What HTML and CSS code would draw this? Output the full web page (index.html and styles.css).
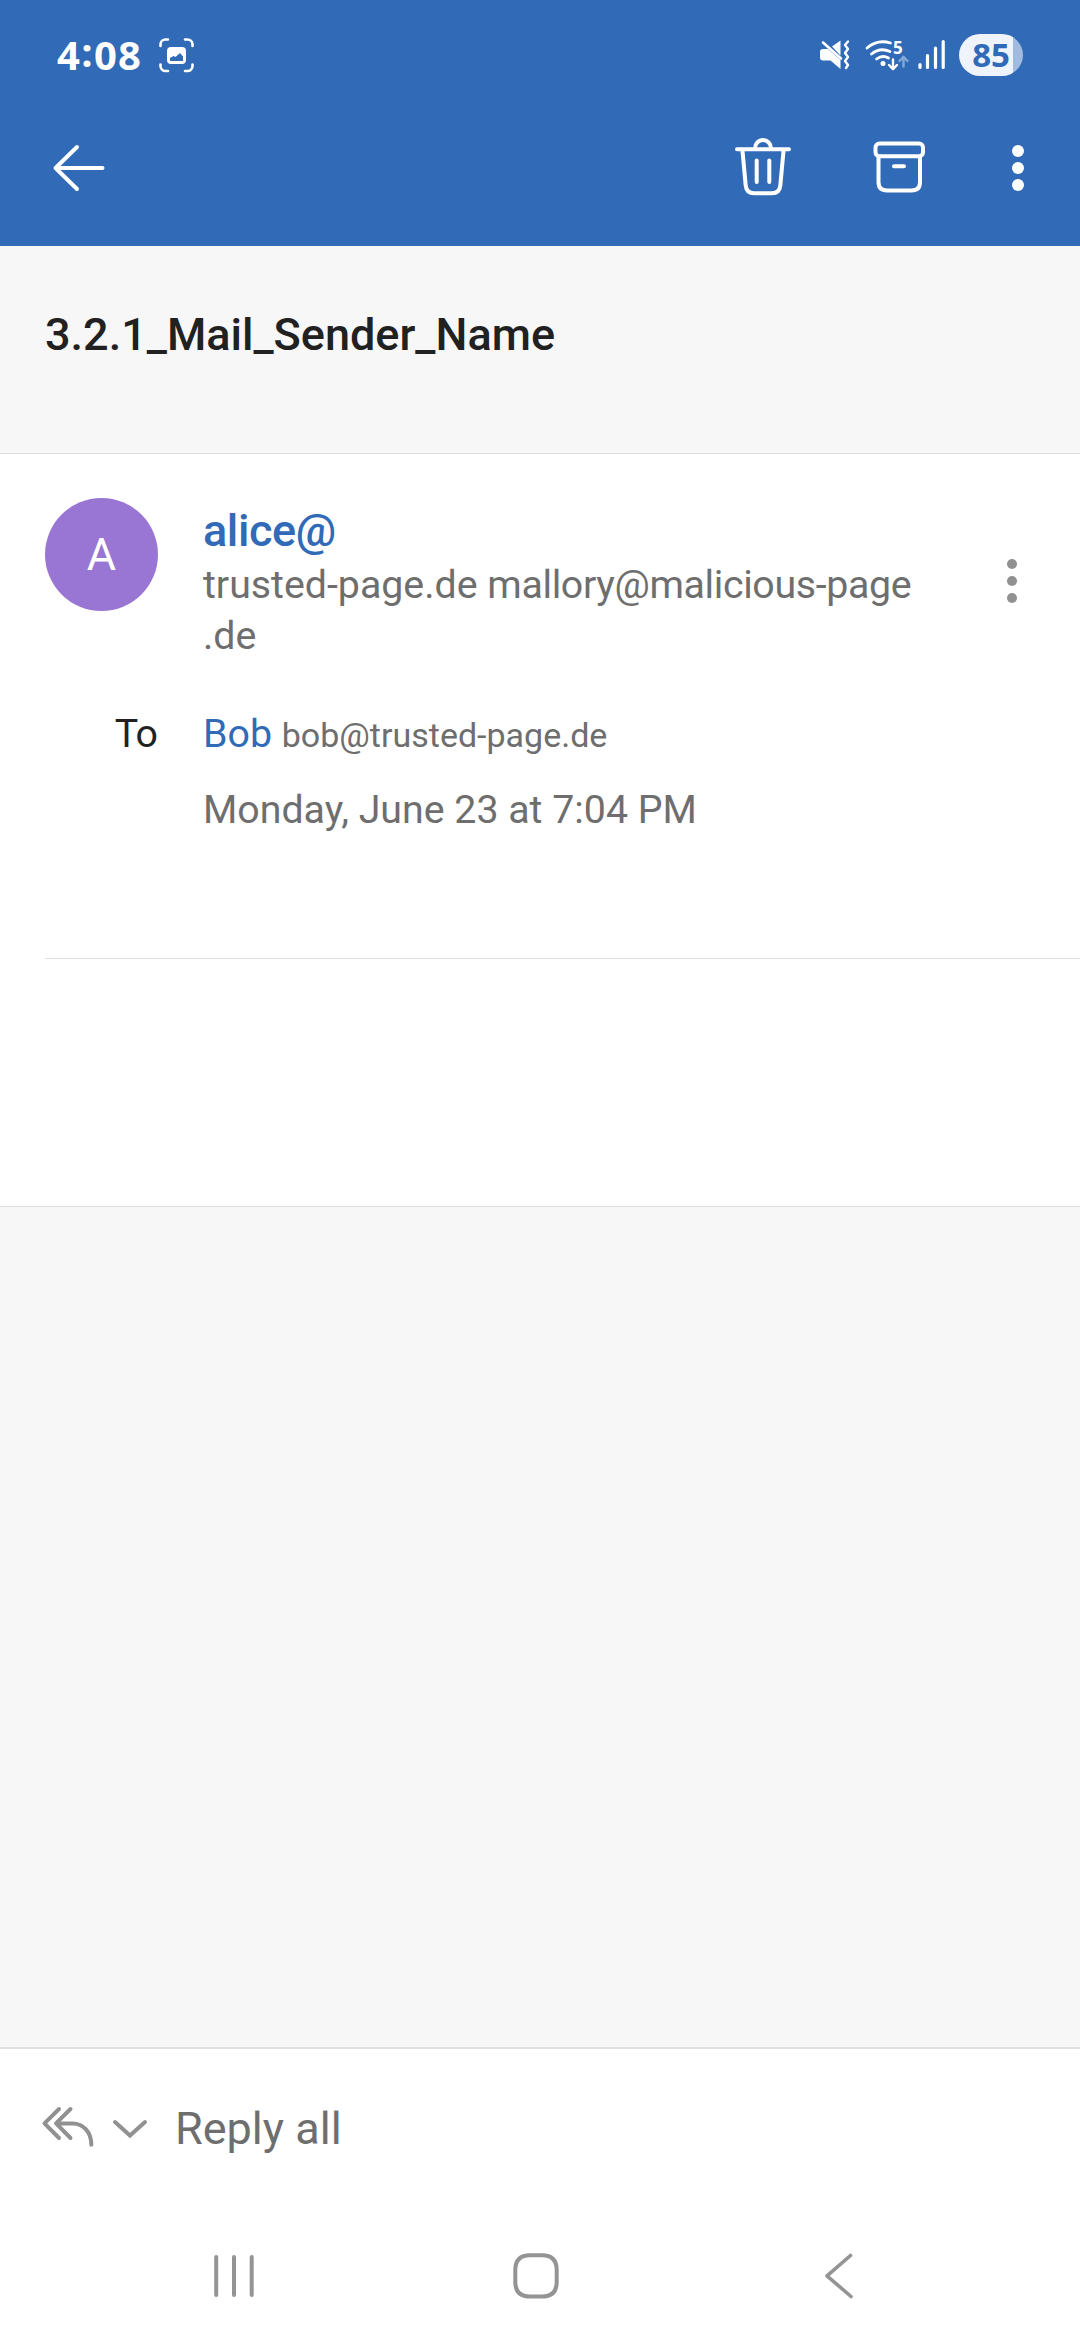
FILE: index.html
```html
<!DOCTYPE html>
<html lang="en">
<head>
<meta charset="utf-8">
<title>Mail</title>
<link rel="stylesheet" href="styles.css">
</head>
<body>
<div class="screen">
  <header class="top">
    <div class="status">
      <div class="status-left">
        <span class="clock">4<span class="colon">:</span>08</span>
        <svg width="37" height="37" viewBox="158 37 37 37" fill="none">
          <g stroke="#fff" stroke-width="2.6" stroke-linecap="round">
            <path d="M160.500 46v-1.500a5 5 0 0 1 5-5h2.500M185 39.500h2.500a5 5 0 0 1 5 5v1.500M192.500 64.500v1.500a5 5 0 0 1-5 5h-2.500M168 71h-2.500a5 5 0 0 1-5-5v-1.500"/>
          </g>
          <rect x="167" y="47" width="19" height="17" rx="4" fill="#fff"/>
          <path d="M170 61v-3l3.500-2 2 1 4.500-4 3 3.500V61z" fill="#316ab7"/>
        </svg>
      </div>
      <div class="status-right">
        <svg class="mute" width="32" height="32" viewBox="819 39 32 32">
          <path d="M832 46.500l8.500-6v15z" fill="#fff"/>
          <path d="M823 49h5l12.500 11v9l-10-8.500H823a3 3 0 0 1-3-3V52a3 3 0 0 1 3-3z" fill="#fff"/>
          <path d="M823 42.500l18 16" stroke="#fff" stroke-width="2.600" stroke-linecap="round"/>
          <path d="M848 41.500l-3 3.500 3 4-3 4 3 4-3 4 3 4-2 3" fill="none" stroke="#fff" stroke-width="2.400" stroke-linecap="round" stroke-linejoin="round"/>
        </svg>
        <svg class="wifi" width="45" height="54" viewBox="864 28.500 45 54">
          <g fill="none" stroke="#fff" stroke-width="2.800" stroke-linecap="round" stroke-linejoin="round">
            <path d="M867 48.500Q877.500 39.500 890.500 43.500"/>
            <path d="M871.500 54.500Q880 47.500 890 52"/>
            <path d="M876.500 59.500Q882.500 55 888.500 58.500"/>
            <path d="M893 60v9.500m-4-4 4 4.200 4-4.200" stroke-width="2.400"/>
            <path d="M903.500 67v-9.500m-4 4 4-4.200 4 4.200" stroke="#84a8d6" stroke-width="2.400"/>
          </g>
          <circle cx="883" cy="64" r="2.500" fill="#fff"/>
          <text x="893" y="54" class="band">5</text>
        </svg>
        <svg class="signal" width="29" height="32" viewBox="917 39 29 32">
          <path d="M920 64.500v3M927.500 55.500v12M935.500 48v19.500M943.200 41.500v26" stroke="#fff" stroke-width="3.200" stroke-linecap="round"/>
        </svg>
        <span class="battery">85</span>
      </div>
    </div>
    <nav class="bar">
      <svg width="54" height="50" viewBox="52 143 54 50" fill="none" stroke="#fff" stroke-width="4" stroke-linecap="round" stroke-linejoin="round">
        <path d="M77 147L55.500 168L77 189M56 168h46.500"/>
      </svg>
      <div class="actions">
        <svg class="trash" width="58" height="62" viewBox="734 137 58 62" fill="none" stroke="#fff" stroke-width="4" stroke-linecap="round">
          <path d="M737 149.300h52M755 148.500a8 8.500 0 0 1 16 0M742.500 151l3.200 34.500q.8 7.700 8.300 7.700h18q7.500 0 8.300-7.700l3.200-34.500M756.700 160.500v21.500M769.300 160.500v21.500"/>
        </svg>
        <svg class="archive" width="56" height="56" viewBox="871 140 56 56" fill="none" stroke="#fff" stroke-width="4" stroke-linecap="round">
          <rect x="875.500" y="143.500" width="47.500" height="12.800" rx="4"/>
          <path d="M878.500 157v25q0 8.500 8.500 8.500h24.500q8.500 0 8.500-8.500v-25M894 166.300h10"/>
        </svg>
        <svg width="14" height="50" viewBox="1011 143 14 50" fill="#fff">
          <circle cx="1018" cy="151" r="6"/><circle cx="1018" cy="168" r="6"/><circle cx="1018" cy="185" r="6"/>
        </svg>
      </div>
    </nav>
  </header>

  <section class="subject">3.2.1_Mail_Sender_Name</section>

  <main class="message">
    <div class="head">
      <div class="avatar">A</div>
      <div class="sender">
        <div class="name">alice@</div>
        <div class="address">trusted-page.de <span class="real">mallory@malicious-page</span><br>.de</div>
      </div>
      <svg class="more" width="12" height="46" viewBox="1006 558 12 46" fill="#919191">
        <circle cx="1012" cy="564" r="5"/><circle cx="1012" cy="581" r="5"/><circle cx="1012" cy="598" r="5"/>
      </svg>
    </div>
    <div class="row">
      <span class="label"><span class="cap">T</span>o</span>
      <span><span class="who">Bob</span> <span class="mail">bob@trusted-page.de</span></span>
    </div>
    <div class="row date">
      <span class="label"></span>
      <span>Monday, June 23 at 7:04 PM</span>
    </div>
    <hr class="rule">
  </main>

  <div class="empty"></div>

  <footer class="bottom">
    <div class="reply">
      <svg width="54" height="44" viewBox="41 2105 54 44" fill="none" stroke="#919191" stroke-width="4" stroke-linecap="round" stroke-linejoin="round">
        <path d="M59 2109L44.500 2123.400L59 2138M70.500 2109L56 2123.400L70.500 2138M57 2123.400h15.500c11 0 18.800 9 18.800 21.300"/>
      </svg>
      <svg class="chevron" width="36" height="20" viewBox="112 2119 36 20" fill="none" stroke="#919191" stroke-width="4" stroke-linecap="round" stroke-linejoin="miter">
        <path d="M115 2122L130 2135.500L145 2122"/>
      </svg>
      <span class="reply-text">Reply all</span>
    </div>
    <div class="navbar">
      <svg class="recents" width="42" height="46" viewBox="213 2253 42 46" stroke="#949494" stroke-width="4" stroke-linecap="round">
        <path d="M216.200 2257v38M234 2257v38M251.700 2257v38"/>
      </svg>
      <svg class="home" width="48" height="48" viewBox="512 2252 48 48" fill="none" stroke="#949494" stroke-width="4">
        <path d="M530 2255.200h12q14.700 0 14.700 14.700v12q0 14.700-14.700 14.700h-12q-14.700 0-14.700-14.700v-12q0-14.700 14.700-14.700z"/>
      </svg>
      <svg class="back" width="32" height="48" viewBox="823 2252 32 48" fill="none" stroke="#949494" stroke-width="3.600" stroke-linecap="round" stroke-linejoin="round">
        <path d="M850.500 2255.500L827 2275.800L851 2296.500"/>
      </svg>
    </div>
  </footer>
</div>
</body>
</html>
```

FILE: styles.css
```css
* { box-sizing: border-box; }

body {
  margin: 0;
  background: #fff;
  font-family: Roboto, "Liberation Sans", sans-serif;
  color: #6e6e6e;
}

svg { display: block; flex: none; }

.screen {
  width: 1080px;
  height: 2340px;
  display: flex;
  flex-direction: column;
  overflow: hidden;
}

/* Blue header: system status and app bar */
.top {
  height: 246px;
  flex: none;
  background: #316ab7;
  color: #fff;
}

.status {
  height: 90px;
  padding: 20px 57px 0;
  display: flex;
  align-items: center;
  justify-content: space-between;
}

.status-left, .status-right { display: flex; align-items: center; }
.status-left { gap: 17px; }

.clock {
  width: 84px;
  font: 700 40px/50px "Open Sans", sans-serif;
  letter-spacing: 1.3px;
  white-space: nowrap;
}
.colon { vertical-align: 3px; line-height: 1; }

.wifi { margin-left: 13px; }
.signal { margin-left: 8px; }
.band { font: 700 17px "Open Sans", sans-serif; fill: #fff; }

.battery {
  width: 64px;
  height: 42px;
  margin-left: 13px;
  border-radius: 21px;
  background: linear-gradient(to right, #eff3fb 54px, #a0bbdf 54px);
  color: #316ab7;
  font: 700 33px/41px "Open Sans", sans-serif;
  text-align: center;
}

.bar {
  height: 156px;
  padding: 0 55px 0 52px;
  display: flex;
  align-items: center;
  justify-content: space-between;
}

.actions { display: flex; align-items: center; }
.archive { margin-left: 79px; margin-right: 84px; }

/* Subject */
.subject {
  height: 208px;
  flex: none;
  padding: 62px 45px 0;
  border-bottom: 1px solid #e0e0e0;
  background: #f7f7f7;
  color: #212121;
  font-size: 45px;
  font-weight: 500;
  line-height: 53px;
}

/* Message header */
.message {
  height: 753px;
  flex: none;
  border-bottom: 1px solid #e0e0e0;
  font-size: 39.3px;
}

.head {
  height: 254px;
  padding: 44px 62px 0 45px;
  display: flex;
  align-items: flex-start;
}

.avatar {
  width: 113px;
  height: 113px;
  flex: none;
  border-radius: 50%;
  background: #9976d3;
  color: #fff;
  font-size: 45px;
  line-height: 113px;
  text-align: center;
}

.sender { flex: 1; margin-left: 45px; padding-top: 6px; }
.name { color: #316ab7; font-size: 45px; font-weight: 500; line-height: 53px; letter-spacing: -0.4px; }
.address { margin-top: 3px; line-height: 51px; white-space: nowrap; }
.real { letter-spacing: -0.35px; }
.more { margin-top: 60px; }

.row { display: flex; gap: 45px; line-height: 52px; height: 52px; }
.label { width: 158px; color: #212121; text-align: right; }
.cap { letter-spacing: -2.5px; }
.who { color: #316ab7; }
.mail { font-size: 34px; }
.date { margin-top: 24px; }
.rule { margin: 122px 0 0 45px; border: 0; height: 1px; background: #e0e0e0; }

.empty { flex: 1; background: #f7f7f7; }

/* Reply bar and system navigation */
.bottom { height: 293px; flex: none; border-top: 2px solid #e0e0e0; }

.reply { height: 156px; padding: 0 41px; display: flex; align-items: center; }
.chevron { margin-left: 17px; margin-top: 3px; }
.reply-text { margin-left: 27px; font-size: 45px; line-height: 53px; margin-top: 3px; }

.navbar { height: 135px; padding: 7px 0 0 213px; display: flex; align-items: center; justify-content: flex-start; }
.home { margin-left: 257px; }
.back { margin-left: 263px; }
```
